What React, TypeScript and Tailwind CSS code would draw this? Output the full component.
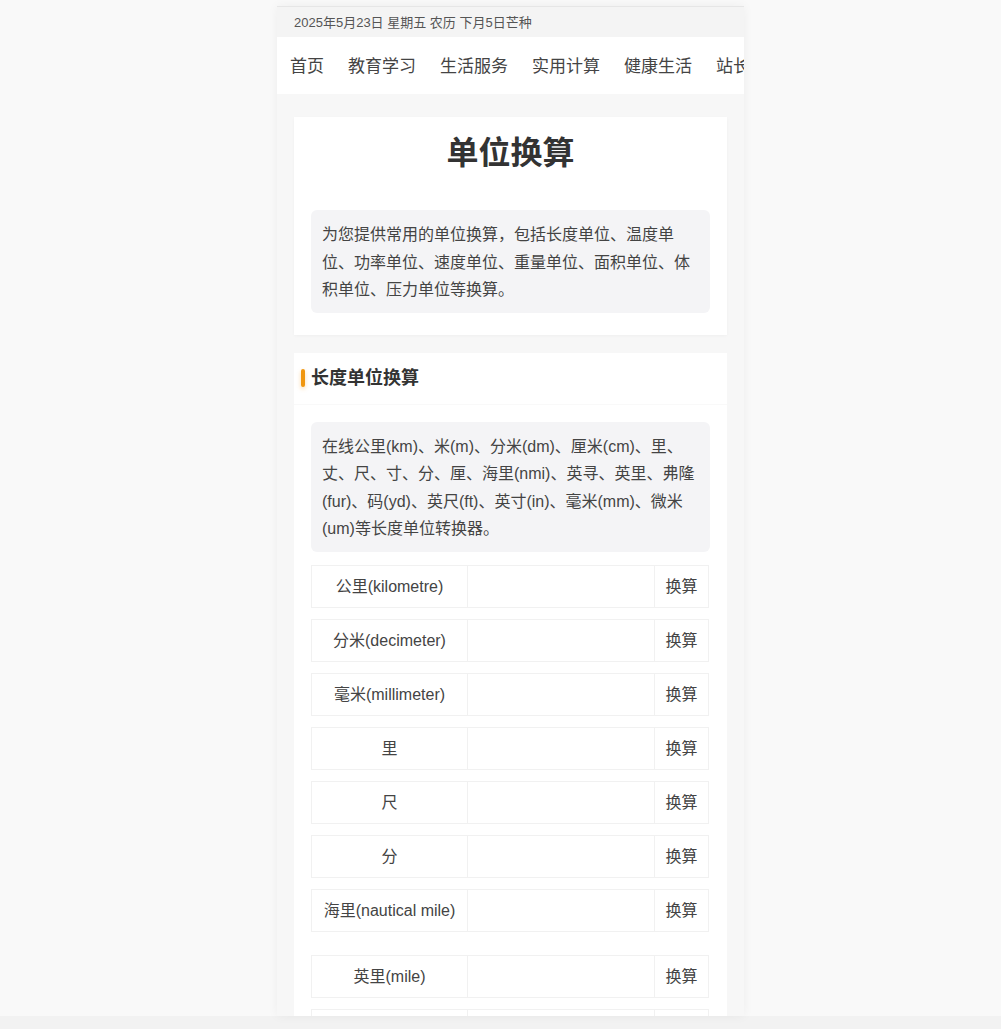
const navItems = ["首页", "教育学习", "生活服务", "实用计算", "健康生活", "站长工具"];

const units = [
  "公里(kilometre)",
  "分米(decimeter)",
  "毫米(millimeter)",
  "里",
  "尺",
  "分",
  "海里(nautical mile)",
  "英里(mile)",
  "码(yard)",
];

function UnitRow({ label, spaced }: { label: string; spaced?: boolean }) {
  return (
    <div className={`flex h-[43px] ${spaced ? "mt-[23px]" : "mt-[11px]"} first:mt-0`}>
      <div className="flex w-[157px] items-center justify-center border border-[#f1f1f1] pt-[2px] text-[16px] text-[#444]">
        {label}
      </div>
      <input
        className="w-[186px] border-y border-[#f1f1f1] bg-white px-2 text-[16px] outline-none"
        type="text"
      />
      <button className="flex w-[55px] items-center justify-center border border-[#f1f1f1] bg-white pt-[2px] text-[16px] text-[#444]">
        换算
      </button>
    </div>
  );
}

export default function App() {
  return (
    <div
      className="min-h-[1029px] bg-[#f9f9f9] pt-[6px]"
      style={{ fontFamily: '"Liberation Sans", "Noto Sans CJK SC", sans-serif' }}
    >
      <div className="flex justify-center pl-[20px]">
        <div className="h-[1010px] w-[467px] overflow-hidden border-t border-[#e6e6e6] bg-[#f7f7f7] shadow-[0_0_10px_rgba(0,0,0,0.05)]">
          <div className="flex h-[30px] items-center bg-[#f4f4f4] pl-[17px] pt-[2px] text-[13px] text-[#555]">
            2025年5月23日 星期五 农历 下月5日芒种
          </div>
          <nav className="flex h-[57px] items-center gap-[24px] overflow-hidden whitespace-nowrap bg-white pl-[13px] pt-[3px] text-[17px] text-[#444]">
            {navItems.map((item) => (
              <span key={item} className="shrink-0">
                {item}
              </span>
            ))}
          </nav>

          <div className="px-[17px] pt-[23px]">
            <section className="bg-white px-[17px] pb-[22px] pt-[17px] shadow-[0_1px_3px_rgba(0,0,0,0.03)]">
              <h1 className="text-center text-[32px] font-bold leading-[38px] text-[#333]">单位换算</h1>
              <p className="mt-[38px] rounded-[6px] bg-[#f4f4f6] px-[11px] pb-[9px] pt-[11px] text-[16px] leading-[27.5px] text-[#444]">
                为您提供常用的单位换算，包括长度单位、温度单位、功率单位、速度单位、重量单位、面积单位、体积单位、压力单位等换算。
              </p>
            </section>

            <section className="mt-[18px] bg-white pb-[20px]">
              <div className="flex h-[52px] items-center border-b border-[#f9f9f9] pl-[7px]">
                <span className="mr-[6px] h-[18px] w-[4px] rounded-full bg-[#f0960f] shadow-[0_2px_4px_rgba(240,150,15,0.35)]" />
                <h2 className="text-[18px] font-bold text-[#333]">长度单位换算</h2>
              </div>
              <div className="px-[17px]">
                <p className="mt-[17px] rounded-[6px] bg-[#f4f4f6] px-[11px] pb-[9px] pt-[11px] text-[16px] leading-[27.5px] text-[#444]">
                  在线公里(km)、米(m)、分米(dm)、厘米(cm)、里、丈、尺、寸、分、厘、海里(nmi)、英寻、英里、弗隆(fur)、码(yd)、英尺(ft)、英寸(in)、毫米(mm)、微米(um)等长度单位转换器。
                </p>
                <div className="mt-[13px]">
                  {units.map((u, i) => (
                    <UnitRow key={u} label={u} spaced={i === 7} />
                  ))}
                </div>
              </div>
            </section>
          </div>
        </div>
      </div>
      <div className="h-[13px] bg-[#f2f2f2]" />
    </div>
  );
}
